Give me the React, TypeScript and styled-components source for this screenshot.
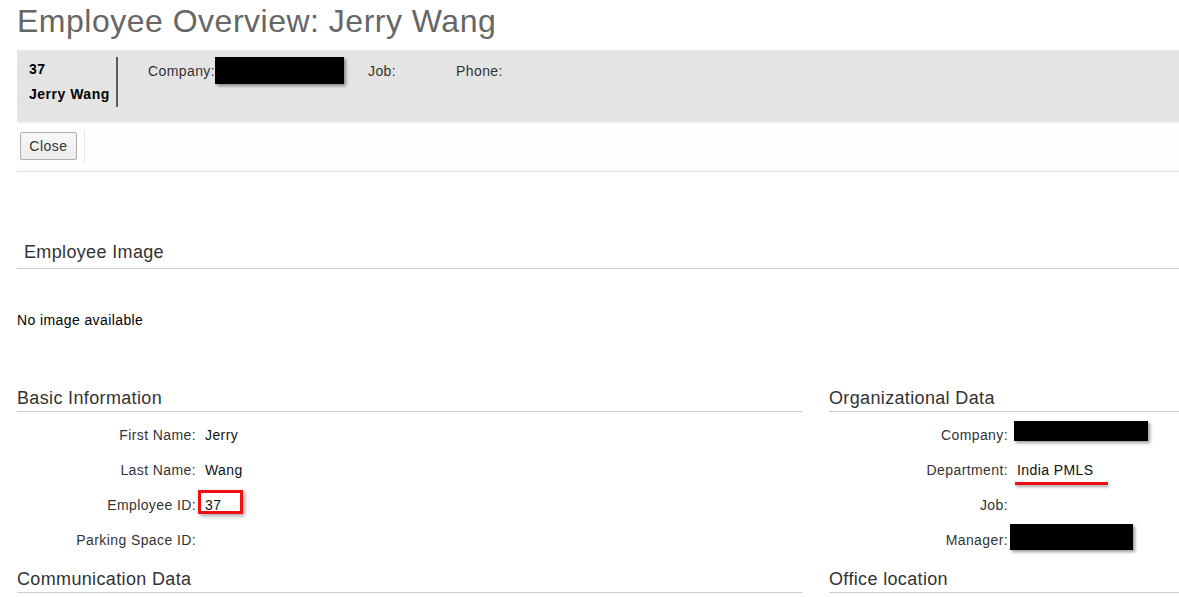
import styled, { createGlobalStyle } from "styled-components";

const GlobalStyle = createGlobalStyle`
  body {
    margin: 0;
    background: #ffffff;
    font-family: "Liberation Sans", Arial, sans-serif;
    font-size: 14px;
    letter-spacing: 0.4px;
    color: #333333;
  }
`;

const Page = styled.div`
  padding-left: 17px;
`;

const Title = styled.h1`
  margin: 0 0 8px;
  font-size: 32px;
  font-weight: normal;
  letter-spacing: 0.5px;
  line-height: 42px;
  color: #666666;
`;

// grey header band with id / name
const HeaderBand = styled.div`
  display: flex;
  align-items: flex-start;
  box-sizing: border-box;
  height: 73px;
  padding: 7px 0 0 12px;
  background: #e4e4e4;
  border-bottom: 2px solid #ededed;
`;

const IdBlock = styled.div`
  width: 87px;
  border-right: 2px solid #5a5a5a;
  font-weight: bold;
  letter-spacing: 0.5px;
  line-height: 25px;
  color: #000000;
`;

const HeaderField = styled.div<{ $gap: number }>`
  display: flex;
  align-items: center;
  height: 27px;
  margin-left: ${(p) => p.$gap}px;
  color: #333333;
`;

const Redacted = styled.div<{ $w: number; $h: number; $dx?: number; $dy?: number }>`
  width: ${(p) => p.$w}px;
  height: ${(p) => p.$h}px;
  margin-left: ${(p) => p.$dx ?? 0}px;
  margin-top: ${(p) => p.$dy ?? 0}px;
  background: #000000;
  box-shadow: 2px 2px 3px rgba(0, 0, 0, 0.4);
`;

const Toolbar = styled.div`
  display: flex;
  align-items: flex-start;
  box-sizing: border-box;
  height: 49px;
  padding-left: 3px;
  background: #fefefe;
  border-bottom: 1px solid #dcdcdc;
`;

const CloseButton = styled.button`
  box-sizing: border-box;
  width: 57px;
  height: 28px;
  margin-top: 9px;
  padding: 0;
  border: 1px solid #adadad;
  border-radius: 2px;
  background: linear-gradient(#f8f8f8, #ececec);
  font-family: inherit;
  font-size: 14px;
  letter-spacing: 0.5px;
  color: #333333;
`;

const ToolbarDivider = styled.div`
  width: 1px;
  height: 32px;
  margin: 7px 0 0 7px;
  background: #e6e6e6;
`;

const ImageSection = styled.section`
  margin-top: 69px;
`;

const SectionTitle = styled.h2<{ $indent?: number; $pad: number }>`
  margin: 0;
  padding: 0 0 ${(p) => p.$pad}px ${(p) => p.$indent ?? 0}px;
  font-size: 18px;
  font-weight: normal;
  letter-spacing: 0.35px;
  line-height: 22px;
  color: #333333;
  border-bottom: 1px solid #cccccc;
`;

const Note = styled.p`
  margin: 42px 0 0;
  line-height: 18px;
  color: #000000;
`;

const Columns = styled.div`
  display: grid;
  grid-template-columns: 785px 1fr;
  column-gap: 27px;
  margin-top: 58px;
`;

const Column = styled.div``;

const Fields = styled.div`
  margin: 5px 0 11px;
`;

const FieldRow = styled.div`
  display: grid;
  grid-template-columns: 179px 1fr;
  column-gap: 9px;
  align-items: center;
  height: 35px;
`;

const Label = styled.div`
  text-align: right;
  color: #333333;
`;

const Value = styled.div`
  position: relative;
  color: #111111;
`;

// red annotation marks drawn over the values
const Highlight = styled.div`
  position: absolute;
  top: -7px;
  left: -7px;
  box-sizing: border-box;
  width: 45px;
  height: 24px;
  border: 3px solid #ee1111;
  box-shadow: 2px 2px 4px rgba(0, 0, 0, 0.35);
`;

const Underline = styled.div`
  position: absolute;
  top: 20px;
  left: -2px;
  width: 93px;
  height: 3px;
  background: #ee1111;
  box-shadow: 1px 2px 3px rgba(0, 0, 0, 0.35);
`;

export default function App() {
  return (
    <>
      <GlobalStyle />
      <Page>
        <Title>Employee Overview: Jerry Wang</Title>
        <HeaderBand>
          <IdBlock>
            <div>37</div>
            <div>Jerry Wang</div>
          </IdBlock>
          <HeaderField $gap={30}>
            Company:
            <Redacted $w={129} $h={27} $dx={0} />
          </HeaderField>
          <HeaderField $gap={24}>Job:</HeaderField>
          <HeaderField $gap={60}>Phone:</HeaderField>
        </HeaderBand>
        <Toolbar>
          <CloseButton>Close</CloseButton>
          <ToolbarDivider />
        </Toolbar>

        <ImageSection>
          <SectionTitle $indent={7} $pad={5}>
            Employee Image
          </SectionTitle>
          <Note>No image available</Note>
        </ImageSection>

        <Columns>
          <Column>
            <SectionTitle $pad={2}>Basic Information</SectionTitle>
            <Fields>
              <FieldRow>
                <Label>First Name:</Label>
                <Value>Jerry</Value>
              </FieldRow>
              <FieldRow>
                <Label>Last Name:</Label>
                <Value>Wang</Value>
              </FieldRow>
              <FieldRow>
                <Label>Employee ID:</Label>
                <Value>
                  37
                  <Highlight />
                </Value>
              </FieldRow>
              <FieldRow>
                <Label>Parking Space ID:</Label>
                <Value />
              </FieldRow>
            </Fields>
            <SectionTitle $pad={2}>Communication Data</SectionTitle>
          </Column>
          <Column>
            <SectionTitle $pad={2}>Organizational Data</SectionTitle>
            <Fields>
              <FieldRow>
                <Label>Company:</Label>
                <Value>
                  <Redacted $w={134} $h={20} $dx={-3} $dy={-7} />
                </Value>
              </FieldRow>
              <FieldRow>
                <Label>Department:</Label>
                <Value>
                  India PMLS
                  <Underline />
                </Value>
              </FieldRow>
              <FieldRow>
                <Label>Job:</Label>
                <Value />
              </FieldRow>
              <FieldRow>
                <Label>Manager:</Label>
                <Value>
                  <Redacted $w={123} $h={26} $dx={-7} $dy={-5} />
                </Value>
              </FieldRow>
            </Fields>
            <SectionTitle $pad={2}>Office location</SectionTitle>
          </Column>
        </Columns>
      </Page>
    </>
  );
}
